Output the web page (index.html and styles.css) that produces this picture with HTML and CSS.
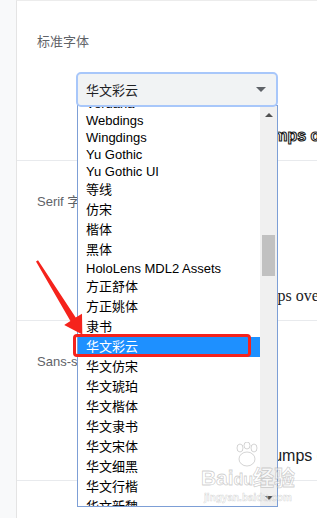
FILE: index.html
```html
<!DOCTYPE html>
<html lang="zh-CN">
<head>
    <meta charset="UTF-8">
    <meta name="viewport" content="width=device-width, initial-scale=1.0">
    <title>自定义字体</title>
    <link rel="stylesheet" href="styles.css">
</head>
<body>
    <div class="settings">
        <section class="font-row">
            <div class="row-label">标准字体</div>
            <div class="select select-open">
                <span class="select-value">华文彩云</span>
                <span class="select-caret"></span>
            </div>
            <div class="sample sample-standard">The quick brown fox jumps over the lazy dog</div>
        </section>
        <section class="font-row">
            <div class="row-label">Serif 字体</div>
            <div class="select select-under">
                <span class="select-value">Times New Roman</span>
                <span class="select-caret"></span>
            </div>
            <div class="sample sample-serif">The quick brown fox jumps over the lazy dog</div>
        </section>
        <section class="font-row">
            <div class="row-label">Sans-serif 字体</div>
            <div class="select select-under">
                <span class="select-value">Arial</span>
                <span class="select-caret"></span>
            </div>
            <div class="sample sample-sans">The quick brown fox jumps over the lazy dog</div>
        </section>
    </div>

    <!-- open list of the first select -->
    <div class="dropdown">
        <div class="options">
            <div class="option">Verdana</div>
            <div class="option">Webdings</div>
            <div class="option">Wingdings</div>
            <div class="option">Yu Gothic</div>
            <div class="option">Yu Gothic UI</div>
            <div class="option cjk">等线</div>
            <div class="option cjk">仿宋</div>
            <div class="option cjk">楷体</div>
            <div class="option cjk">黑体</div>
            <div class="option">HoloLens MDL2 Assets</div>
            <div class="option cjk">方正舒体</div>
            <div class="option cjk">方正姚体</div>
            <div class="option cjk">隶书</div>
            <div class="option cjk selected">华文彩云</div>
            <div class="option cjk">华文仿宋</div>
            <div class="option cjk">华文琥珀</div>
            <div class="option cjk">华文楷体</div>
            <div class="option cjk">华文隶书</div>
            <div class="option cjk">华文宋体</div>
            <div class="option cjk">华文细黑</div>
            <div class="option cjk">华文行楷</div>
            <div class="option cjk">华文新魏</div>
        </div>
        <div class="scrollbar">
            <div class="scroll-btn"><span class="arrow-up"></span></div>
            <div class="scroll-track"><div class="scroll-thumb"></div></div>
            <div class="scroll-btn"><span class="arrow-down"></span></div>
        </div>
    </div>

    <div class="callout-box"></div>
    <svg class="callout-arrow" width="317" height="518" viewBox="0 0 317 518">
        <polygon points="36,261.5 38,260.3 75.7,317.6 82,313.8 82.3,334.5 64.2,325 70.4,321" fill="#f5231c"/>
    </svg>

    <div class="watermark">
        <svg class="paw" width="30" height="26" viewBox="0 0 30 26">
            <ellipse cx="8" cy="6" rx="3" ry="4"/>
            <ellipse cx="15" cy="3.5" rx="3" ry="3.5"/>
            <ellipse cx="22" cy="6" rx="3" ry="4"/>
            <ellipse cx="15" cy="17" rx="8" ry="7"/>
        </svg>
        <div class="wm-title">Bai<span class="wm-du">du</span>经验</div>
        <div class="wm-url">jingyan.baidu.com</div>
    </div>
</body>
</html>
```

FILE: styles.css
```css
body {
    margin: 0;
    height: 100vh;
    overflow: hidden;
    background-color: #f8f9fa;
    font-family: "Liberation Sans", "Noto Sans CJK SC", sans-serif;
}

.settings {
    margin-left: 16px;
    height: 100%;
    background-color: #fff;
    border-left: 1px solid #e4e4e4;
    border-top: 1px solid #ececec;
}

.font-row {
    height: 160px;
    padding: 33px 0 0 20px;
    box-sizing: border-box;
    border-bottom: 1px solid #e8eaed;
    overflow: hidden;
    white-space: nowrap;
}

.row-label {
    font-size: 13px;
    line-height: 16px;
    color: #5f6368;
}

.select {
    position: relative;
    z-index: 2;
    display: flex;
    align-items: center;
    justify-content: space-between;
    box-sizing: border-box;
    width: 202px;
    height: 35px;
    margin: 22px 0 0 39px;
    padding: 0 10px 0 8px;
    background-color: #f1f3f4;
    border: 2px solid #a8c7fa;
    border-radius: 5px;
    font-size: 13px;
    color: #202124;
}

.select-under {
    z-index: 0;
    width: 198px;
    margin-left: 41px;
    border-color: #f1f3f4;
}

.select-caret {
    width: 0;
    height: 0;
    border-left: 5px solid transparent;
    border-right: 5px solid transparent;
    border-top: 5px solid #5f6368;
}

.sample {
    margin-top: 19px;
    line-height: 20px;
    font-size: 16px;
    color: #202124;
}

.sample-standard {
    padding-left: 62px;
    font-family: "Liberation Sans", sans-serif;
    font-weight: bold;
    color: #fff;
    -webkit-text-stroke: 1.1px #1a1a1a;
}

.sample-serif {
    padding-left: 77px;
    font-family: "Liberation Serif", serif;
}

.sample-sans {
    padding-left: 85px;
}

/* open list */
.dropdown {
    position: absolute;
    left: 77px;
    top: 105px;
    z-index: 1;
    display: flex;
    width: 201px;
    height: 402px;
    box-sizing: border-box;
    background-color: #fff;
    border: 1px solid #7d9fd6;
    overflow: hidden;
}

.options {
    flex: 1;
    margin-top: -11px;
}

.option {
    height: 17px;
    line-height: 17px;
    padding-left: 8px;
    font-size: 13px;
    color: #000;
}

.option.cjk {
    height: 20px;
    line-height: 20px;
}

.option.selected {
    background-color: #1e90ff;
    color: #fff;
}

.scrollbar {
    display: flex;
    flex-direction: column;
    width: 17px;
    background-color: #f0f0f0;
}

.scroll-btn {
    display: flex;
    align-items: center;
    justify-content: center;
    height: 17px;
}

.arrow-up, .arrow-down {
    width: 0;
    height: 0;
    border-left: 4px solid transparent;
    border-right: 4px solid transparent;
}

.arrow-up {
    border-bottom: 4px solid #505050;
}

.arrow-down {
    border-top: 4px solid #505050;
}

.scroll-track {
    flex: 1;
}

.scroll-thumb {
    width: 13px;
    height: 41px;
    margin: 112px auto 0;
    background-color: #c1c1c1;
}

/* annotation */
.callout-box {
    position: absolute;
    left: 73px;
    top: 334px;
    z-index: 3;
    width: 178px;
    height: 23px;
    box-sizing: border-box;
    border: 3px solid #f5231c;
    border-radius: 4px;
}

.callout-arrow {
    position: absolute;
    left: 0;
    top: 0;
    z-index: 3;
}

.watermark {
    position: absolute;
    left: 198px;
    top: 442px;
    z-index: 4;
    width: 100px;
    text-align: center;
    color: rgba(255, 255, 255, 0.5);
}

.paw {
    display: block;
    margin: 0 auto -2px 34px;
    fill: rgba(255, 255, 255, 0.4);
    stroke: rgba(160, 160, 160, 0.45);
    stroke-width: 1;
}

.wm-title {
    font-size: 21px;
    line-height: 24px;
    font-weight: bold;
    -webkit-text-stroke: 0.8px rgba(150, 150, 150, 0.45);
}

.wm-du {
    font-size: 16px;
}

.wm-url {
    font-size: 10px;
    line-height: 12px;
    font-weight: bold;
    -webkit-text-stroke: 0.5px rgba(150, 150, 150, 0.4);
}
```
